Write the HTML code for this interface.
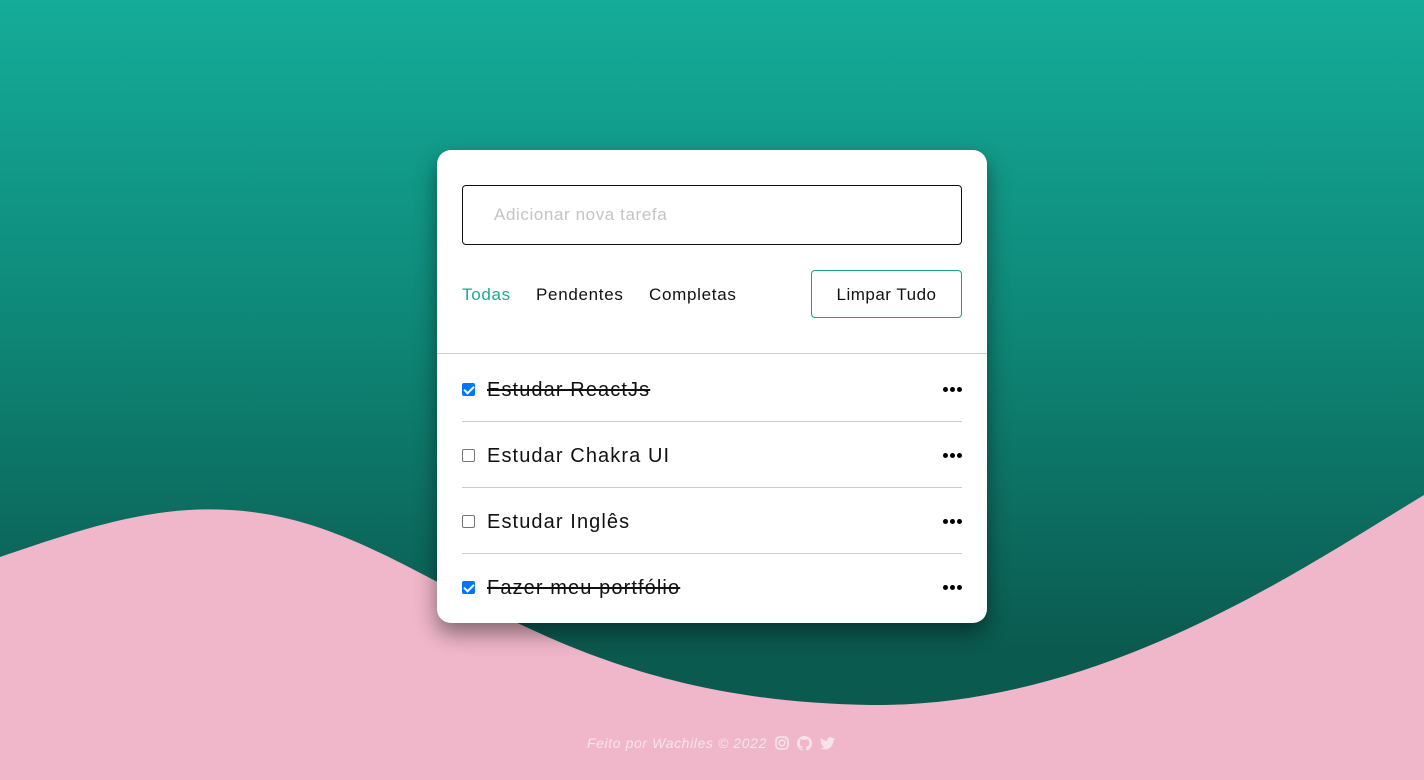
<!DOCTYPE html>
<html><head><meta charset="utf-8"><style>
*{margin:0;padding:0;box-sizing:border-box}
body{width:1424px;height:780px;overflow:hidden;position:relative;font-family:"Liberation Sans",sans-serif;background:linear-gradient(#15ac99 0px,#0f8a7a 300px,#0b5a4f 650px)}
svg.bg{position:absolute;left:0;top:0}
.card{position:absolute;left:437px;top:150px;width:550px;height:473px;background:#fff;border-radius:14px;box-shadow:0 10px 22px rgba(0,0,0,.45)}
.inp{position:absolute;left:25px;top:35px;width:500px;height:60px;border:1px solid #111;border-radius:4px;color:#c4c4c4;font-size:17px;padding:19px 0 0 31px;letter-spacing:.6px}
.tab{position:absolute;top:135px;font-size:17px;color:#111;letter-spacing:.7px}
.btn{position:absolute;left:374px;top:120px;width:151px;height:48px;border:1px solid #16a08f;border-radius:4px;font-size:17px;text-align:center;line-height:48px;color:#111;letter-spacing:.5px}
.hr{position:absolute;left:0;top:203px;width:550px;height:1px;background:#ccc}
.item{position:absolute;left:25px;width:500px;height:66px;font-size:20px;color:#111}
.item .cb{position:absolute;left:0;top:-6px;width:13px;height:13px;border:1px solid #767676;border-radius:2px;background:#fff}
.item .cb.on{background:#0075ff;border-color:#0075ff}
.item .cb.on:after{content:"";position:absolute;left:3px;top:0px;width:4px;height:8px;border:solid #fff;border-width:0 2px 2px 0;transform:rotate(45deg)}
.item .t{position:absolute;left:25px;top:-10px;white-space:nowrap;letter-spacing:1.1px}
.item .t.s{text-decoration:line-through}
.item .d{position:absolute;right:0;top:-2px;display:flex;gap:2px}
.item .d i{width:5px;height:5px;border-radius:50%;background:#000}
.sep{position:absolute;left:25px;width:500px;height:1px;background:#ccc}
.foot{position:absolute;top:735px;left:587px;color:#f7e4ea;font-style:italic;font-size:14px;display:flex;align-items:center;gap:8px}
.foot span{letter-spacing:.6px}
</style></head><body>
<svg class="bg" width="1424" height="780"><path d="M0,557 C80,530 150,505 230,510 C420,520 520,700 870,705 C1100,708 1300,570 1424,495 L1424,780 L0,780 Z" fill="#efb7c9"/></svg>
<div class="card">
<div class="inp">Adicionar nova tarefa</div>
<div class="tab" style="left:25px;color:#1fa892">Todas</div>
<div class="tab" style="left:99px">Pendentes</div>
<div class="tab" style="left:212px">Completas</div>
<div class="btn">Limpar Tudo</div>
<div class="hr"></div>
<div class="item" style="top:239px"><div class="cb on"></div><div class="t s">Estudar ReactJs</div><div class="d"><i></i><i></i><i></i></div></div>
<div class="sep" style="top:271px"></div>
<div class="item" style="top:305px"><div class="cb"></div><div class="t">Estudar Chakra UI</div><div class="d"><i></i><i></i><i></i></div></div>
<div class="sep" style="top:337px"></div>
<div class="item" style="top:371px"><div class="cb"></div><div class="t">Estudar Inglês</div><div class="d"><i></i><i></i><i></i></div></div>
<div class="sep" style="top:403px"></div>
<div class="item" style="top:437px"><div class="cb on"></div><div class="t s">Fazer meu portfólio</div><div class="d"><i></i><i></i><i></i></div></div>
</div>
<div class="foot"><span>Feito por Wachiles © 2022</span>
<svg width="14" height="14" viewBox="0 0 14 14"><rect x="1" y="1" width="12" height="12" rx="3.5" fill="none" stroke="#f7e4ea" stroke-width="1.6"/><circle cx="7" cy="7" r="2.8" fill="none" stroke="#f7e4ea" stroke-width="1.6"/><circle cx="10.5" cy="3.5" r=".8" fill="#f7e4ea"/></svg>
<svg width="15" height="15" viewBox="0 0 16 16"><path fill="#f7e4ea" d="M8 0C3.58 0 0 3.58 0 8c0 3.54 2.290 6.53 5.47 7.59.4.07.55-.17.55-.38v-1.33c-2.23.48-2.7-1.070-2.7-1.070-.36-.92-.89-1.170-.89-1.170-.73-.5.05-.49.05-.49.8.06 1.230.83 1.230.83.72 1.220 1.870.87 2.330.66.07-.52.28-.87.5-1.070-1.780-.2-3.640-.89-3.640-3.950 0-.87.31-1.590.82-2.150-.08-.2-.36-1.020.08-2.120 0 0 .67-.21 2.2.82A7.6 7.6 0 0 1 8 3.87c.68 0 1.360.09 2 .27 1.530-1.040 2.2-.82 2.2-.82.44 1.1.16 1.920.08 2.120.51.56.82 1.270.82 2.150 0 3.070-1.870 3.750-3.650 3.950.29.25.54.73.54 1.480v2.2c0 .21.15.46.55.38A8 8 0 0 0 16 8c0-4.420-3.580-8-8-8z"/></svg>
<svg width="15" height="13" viewBox="0 0 24 20"><path fill="#f7e4ea" d="M24 2.4a9.8 9.8 0 0 1-2.8.8A4.9 4.9 0 0 0 23.3.4a9.9 9.9 0 0 1-3.1 1.2A4.9 4.9 0 0 0 11.8 6 14 14 0 0 1 1.7.9a4.9 4.9 0 0 0 1.5 6.6A4.9 4.9 0 0 1 1 6.9a4.9 4.9 0 0 0 3.9 4.8 4.9 4.9 0 0 1-2.2.1 4.9 4.9 0 0 0 4.6 3.4A9.9 9.9 0 0 1 0 17.3 14 14 0 0 0 7.5 19.5c9.1 0 14-7.5 14-14v-.6A10 10 0 0 0 24 2.4z"/></svg>
</div>
</body></html>
